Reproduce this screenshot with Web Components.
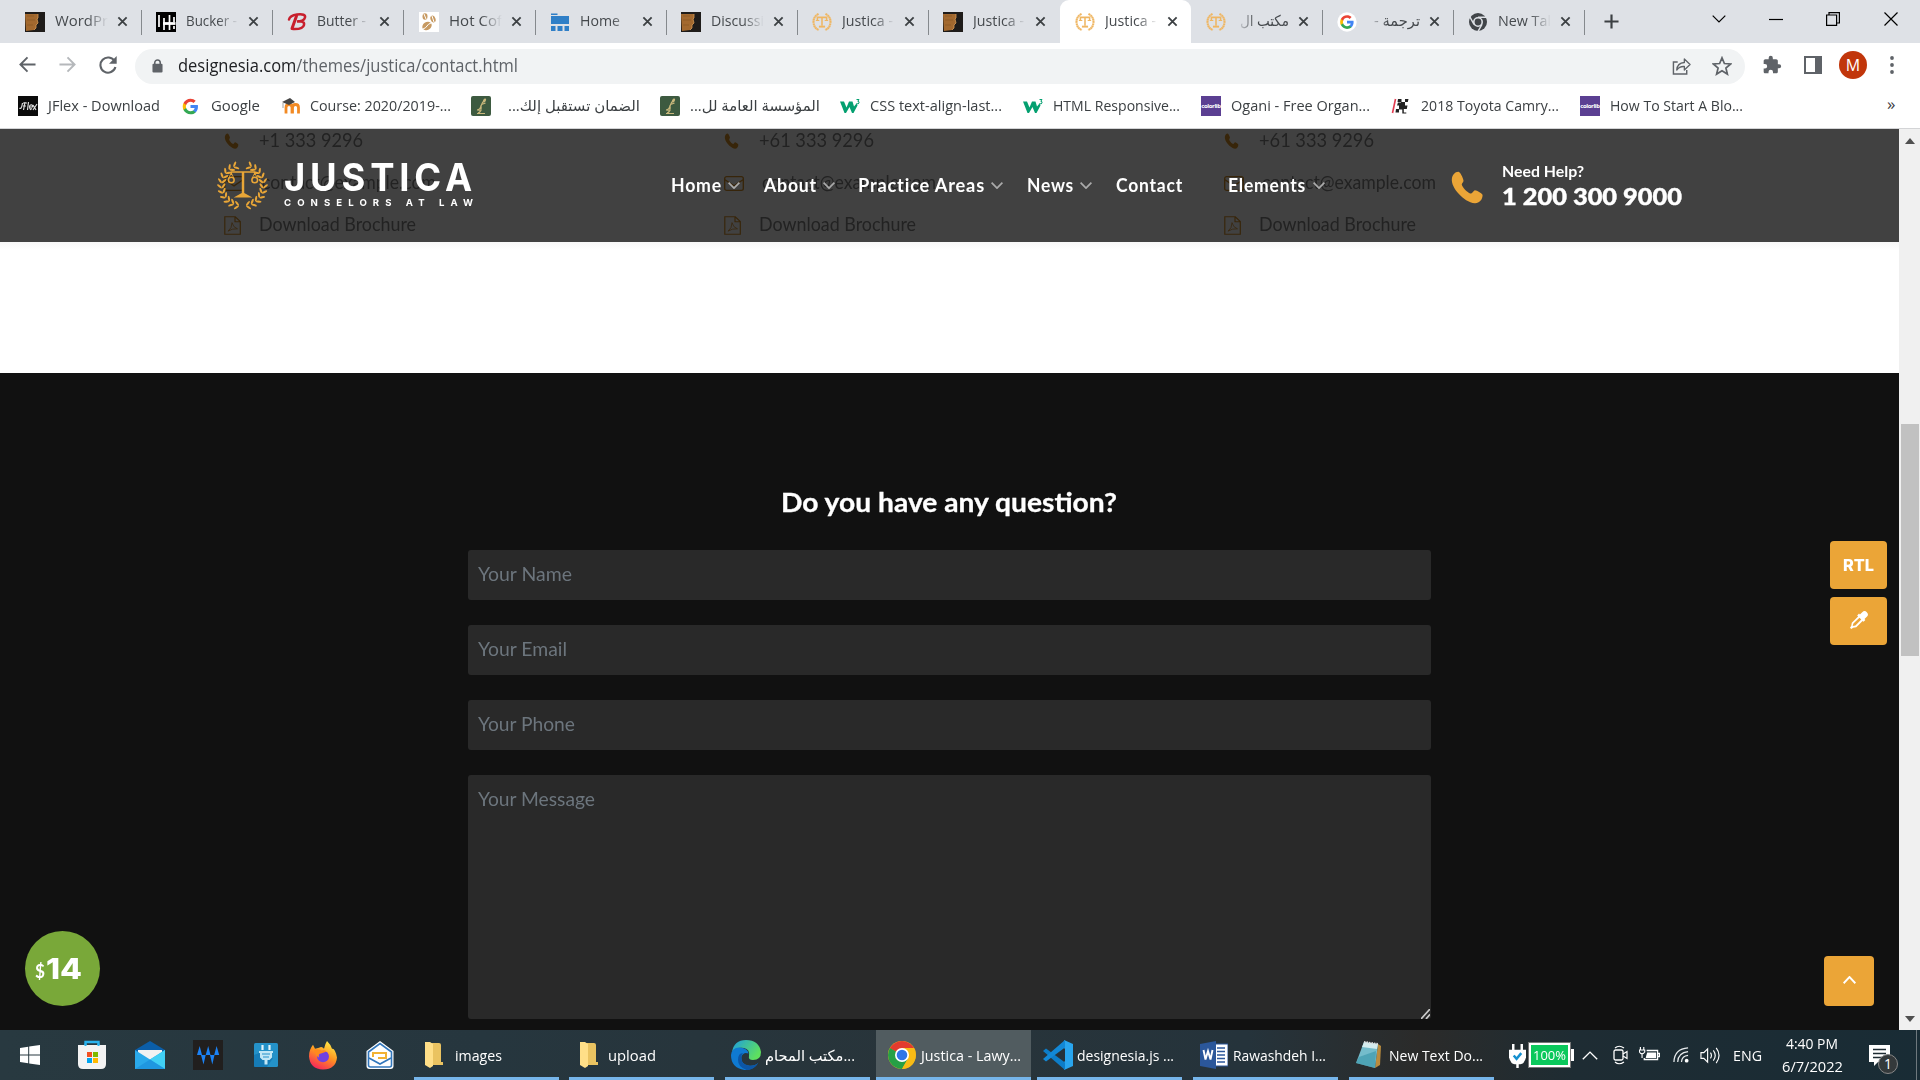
<!DOCTYPE html>
<html lang="en"><head><meta charset="utf-8"><title>Justica - Lawyer</title>
<style>
html,body{margin:0;height:100%;overflow:hidden;background:#111}
body{font-family:"Open Sans","Noto Sans","DejaVu Sans",sans-serif}
</style></head><body>
<desktop-screen></desktop-screen>
<script>
/* Laurel wreath: pairs of leaves along each half of a circle */
const leaves=(()=>{let s='';for(const side of[-1,1])for(let i=0;i<11;i++){const a=(10+i*14.5)*Math.PI/180,r=20.5;
 const x=26+side*Math.sin(a)*r,y=25.5+Math.cos(a)*r,t=Math.atan2(-Math.sin(a),side*Math.cos(a));
 for(const o of[-.75,.75]){const q=t+o;
 s+=`<ellipse rx="2.9" ry="1.05" transform="translate(${(x+Math.cos(q)*2.9).toFixed(1)} ${(y+Math.sin(q)*2.9).toFixed(1)}) rotate(${(q*180/Math.PI).toFixed(0)})"/>`}}
 return s})();
const G='<path fill="#4285F4" d="M45.1 24.5c0-1.6-.1-3.1-.4-4.5H24v8.5h11.8c-.5 2.8-2 5.1-4.4 6.7v5.5h7.1c4.2-3.8 6.6-9.5 6.6-16.2z"/><path fill="#34A853" d="M24 46c5.9 0 10.9-2 14.6-5.3l-7.1-5.5c-2 1.3-4.5 2.1-7.5 2.1-5.7 0-10.6-3.9-12.3-9.1H4.3v5.7C8 41.100 15.400 46 24 46z"/><path fill="#FBBC05" d="M11.700 28.200c-.4-1.3-.7-2.700-.7-4.200s.3-2.900.7-4.200v-5.700H4.300A22 22 0 0 0 2 24c0 3.600.9 6.900 2.300 9.900z"/><path fill="#EA4335" d="M24 10.700c3.200 0 6.100 1.100 8.400 3.300l6.300-6.300C34.900 4.200 29.900 2 24 2 15.400 2 8 6.900 4.300 14.100l7.400 5.700C13.400 14.600 18.300 10.700 24 10.700z"/>';
const GRASS='<rect width="20" height="20" rx="2" fill="#3d5a40"/><path d="M6 17.500h8M7 17q4-1 3-8M10 10q1-4 4-6M10.500 8.500l4-1.500M10 10q-1 4-4 4l4.500.5" stroke="#c9b87c" fill="none" stroke-width="1.200"/><ellipse cx="13.500" cy="4.500" rx="1.300" ry="2.200" transform="rotate(30 13.500 4.500)" fill="#c9b87c"/>';
const W3='<path d="M0 5.500h4l2.500 6 2.500-6h3.500l1.500 5 2.500-3 1 2-4 7.500h-1.500l-2.500-6-3.500 6H4.500z" fill="#04a070"/><path d="M16.500 3.500h2.500l-1.200 1.800q1.700 0 1.200 1.700t-2.500.5" stroke="#04a070" fill="none" stroke-width="1"/>';
const I={
 wood:['0 0 20 20','<rect width="20" height="20" fill="#1f1c1a"/><path d="M0 2l13 0 0 4-1 1 1 4-2 2v3L9 18 1 19z" fill="#a3692f"/><path d="M13 2v4l-1 1 1 4-2 2v3l-2 2" fill="none" stroke="#d59a55" stroke-width=".8"/><path d="M2 4h7M2 8h8M2 13h6" stroke="#8c5824" stroke-width=".8"/>'],
 H:['0 0 20 20','<rect width="20" height="20"/><path d="M3 3v12M8 6v12M13.500 3v15M18 5v5M18 14v3" stroke="#fff" stroke-width="1.700" fill="none"/><path d="M7 11.500h12.500" stroke="#fff" stroke-width="2.800"/>'],
 B:['0 0 20 20','<g fill="none" stroke="#c81f2d" stroke-linecap="round"><path d="M9.500 4L5 16.500" stroke-width="3"/><path d="M2 7.500Q3 3.500 10 2.500q9-1 8 3t-8 4q8-1 7 3.500T6 17" stroke-width="2.500"/></g>'],
 coffee:['0 0 20 20','<rect width="20" height="20" fill="#fff"/><g fill="#c79a62"><ellipse cx="6" cy="4.500" rx="2.500" ry="3.200"/><ellipse cx="14" cy="7" rx="2.500" ry="3.500" transform="rotate(-20 14 7)"/><ellipse cx="8" cy="14" rx="5" ry="4" transform="rotate(-35 8 14)"/></g><path d="M5 2l2 5M13 4l2 6M4 17q3-1 4-3t4-3" stroke="#fff" fill="none"/>'],
 home:['0 0 20 20','<path d="M1 1.500h6.500v1.500H1zM1 4h18v8H1z" fill="#2f7fc7"/><path d="M1 14h4.500v5H1zM7.500 14h5v5h-5zM14.500 14h4.500v5h-4.500z" fill="#2f7fc7"/>'],
 just:['0 0 52 52','<g stroke="#efb662" fill="none"><path d="M17 5Q3 12 4 27t14 20M35 5q14 7 13 22T34 47" stroke-width="5.500" stroke-dasharray="5 .8"/><path d="M14 21v-7h24v7M26 14v22" stroke-width="4"/><path d="M18 38h16" stroke-width="5"/><path d="M10 22h9M33 22h9" stroke-width="3"/></g>'],
 emblem:['0 0 52 50',`<g fill="#e9a637">${leaves}</g><g stroke="#e9a637" fill="none" stroke-width="1.500"><path d="M15 15v-3h23v3M26.500 12v24"/><path d="M15 13l-2.500 5M15 13l2.500 5M38 13l-2.500 5M38 13l2.500 5" stroke-width=".8"/><circle cx="15" cy="20" r="2.800"/><circle cx="38" cy="20" r="2.800"/></g><path d="M25.300 12h2.400v21l8 4.500H17.300l8-4.500z" fill="#e9a637"/>`],
 google:['0 0 48 48',G], gcirc:['-8 -8 64 64','<circle cx="24" cy="24" r="31" fill="#fff"/>'+G],
 chromeg:['0 0 20 20','<circle cx="10" cy="10" r="9" fill="#414549"/><circle cx="10" cy="10" r="4.200" fill="#414549" stroke="#dee1e6" stroke-width="1.600"/><path d="M10 5.300h8.200M6 12.400L2 5.200M14 12.300l-4 7" stroke="#dee1e6" stroke-width="1.400"/>'],
 x:['0 0 12 12','<path d="M1.500 1.500l9 9M10.500 1.500l-9 9" stroke="#3c4043" stroke-width="2"/>'],
 plus:['0 0 16 16','<path d="M8 .5v15M.5 8h15" stroke="#3c4043" stroke-width="2.300"/>'],
 dn:['0 0 14 8','<path d="M.7.7L7 7 13.300.7" stroke="currentColor" fill="none" stroke-width="var(--sw,1.200)"/>'],
 up:['0 0 14 8','<path d="M.7 7.300L7 1l6.300 6.300" stroke="currentColor" fill="none" stroke-width="var(--sw,1.200)"/>'],
 min:['0 0 14 14','<path d="M0 7.500h14" stroke="#000" stroke-width="1.200"/>'],
 max:['0 0 14 14','<path d="M.6 3h10v10.400H.6zM3 3V.6h10.400v10.400H11" stroke="#000" fill="none" stroke-width="1.200"/>'],
 close:['0 0 14 14','<path d="M.5.5l13 13M13.500.5l-13 13" stroke="#000" stroke-width="1.200"/>'],
 back:['0 0 18 18','<path d="M17.500 9H2M9 1.500L1.500 9 9 16.500" stroke="currentColor" stroke-width="2" fill="none"/>'],
 fwd:['0 0 18 18','<path d="M.5 9H16M9 1.500L16.500 9 9 16.500" stroke="currentColor" stroke-width="2" fill="none"/>'],
 reload:['0 0 18 18','<path d="M15.600 5.200A7.600 7.600 0 1 0 16.400 11" stroke="#5f6368" stroke-width="2.100" fill="none"/><path d="M17.700 0v7.700H10z" fill="#5f6368"/>'],
 lock:['0 0 12 15','<rect x=".5" y="5" width="11" height="9.500" rx="1.200" fill="#5f6368"/><path d="M3 6V4a3 3 0 0 1 6 0v2" fill="none" stroke="#5f6368" stroke-width="1.700"/>'],
 share:['0 0 20 18','<path d="M6 5H1.500v12h14v-4" fill="none" stroke="#5f6368" stroke-width="1.500"/><path d="M5 13q.5-7 8-7.500V2l6 5.500-6 5.500V9.500Q8 9 5 13z" fill="none" stroke="#5f6368" stroke-width="1.400" stroke-linejoin="round"/>'],
 star:['0 0 20 20','<path d="M10 1.800l2.400 5.700 6.200.5-4.700 4 1.500 6.100L10 14.800l-5.400 3.300L6.100 12 1.400 8l6.200-.5z" fill="none" stroke="#5f6368" stroke-width="1.700"/>'],
 puzzle:['0 0 24 24','<path fill="#5f6368" d="M20.500 11H19V7c0-1.100-.9-2-2-2h-4V3.500a2.500 2.500 0 0 0-5 0V5H4c-1.100 0-2 .9-2 2v3.800h1.500a2.700 2.700 0 0 1 0 5.400H2V20c0 1.100.9 2 2 2h3.800v-1.500a2.700 2.700 0 0 1 5.400 0V22H17c1.100 0 2-.9 2-2v-4h1.500a2.500 2.500 0 0 0 0-5z"/>'],
 side:['0 0 18 18','<path d="M1 1h16v16H1z" fill="none" stroke="#5f6368" stroke-width="2"/><path d="M11 1h6v16h-6z" fill="#5f6368"/>'],
 dots:['0 0 4 18','<g fill="#5f6368"><circle cx="2" cy="2" r="1.900"/><circle cx="2" cy="9" r="1.900"/><circle cx="2" cy="16" r="1.900"/></g>'],
 jflex:['0 0 20 20','<rect width="20" height="20" fill="#0b0b0b"/><path d="M1.500 12q2 2 3-5M7 6L5.500 14M5 7h4M5 10h3M10.500 6l-1 8M12 11h2.500q0-3-2-2t0 4.500l1.500-1M15 9l3 5M19 8l-4 6" stroke="#ddd" stroke-width="1.200" fill="none"/>'],
 moodle:['0 0 20 20','<path d="M5 17.500v-6q0-3 3-3t3 3v6M11.500 17.500v-6q0-3 3-3t3 3v6" stroke="#f28a24" stroke-width="2.800" fill="none"/><path d="M1 6l8-4 5 4-6 3z" fill="#444"/><path d="M2 7v5" stroke="#888" stroke-width=".8"/>'],
 grass:['0 0 20 20',GRASS], w3:['0 0 20 20',W3],
 toyota:['0 0 20 20','<path d="M4.500 3L1.500 17" stroke="#e23b50" stroke-width="1.600"/><path d="M7 3h3.500v3H14V3h3.500l-.7 3H14v3.500h2.500l-.7 3.500h-3v3.500h2.500v1h-4v-4H8v3H4.500L5 13h3V9.500H6L7 6.500h3V6H6.500z" fill="#222"/>'],
 phone:['0 0 24 24','<path fill="currentColor" d="M5.800.6C3.600.600 1.500 3 1.300 6 .700 12 9.500 22.500 17.500 23.500c3 .2 5.500-2.500 5.500-6 0-1-4.500-3.800-5.700-3.400-1 .4-1.600 2.600-3 2.300-2-.5-5.800-4.700-6-6.500 0-1 1.500-1.800 1.200-3.100C9.200 5 7.300.700 5.800.6z"/>'],
 mail:['0 0 20 16','<rect x=".7" y=".7" width="18.600" height="14.600" rx="2" fill="none" stroke="currentColor" stroke-width="1.400"/><path d="M1 4l9 6.500L19 4" fill="none" stroke="currentColor" stroke-width="1.400"/>'],
 pdf:['0 0 17 20','<path d="M.8.8h10.500l5 5v13.400H.8zM11 1v5h5" fill="none" stroke="currentColor" stroke-width="1.200"/><path d="M4 16q4-3 4-9 1 5 5.500 6.500Q8 13 4 16z" fill="none" stroke="currentColor" stroke-width=".8"/>'],
 drop:['0 0 20 20','<path fill="#fff" d="M18.700 1.300a3.600 3.600 0 0 0-5.100 0L11 3.900l-1-1L8 5l1 1-7 7-.6 3.500L0 18.500 1.500 20l2-1.400L7 18l7-7 1 1 2.100-2-1-1 2.600-2.600a3.600 3.600 0 0 0 0-5.100zM6 16l-3 .8.800-2.800L10.500 7.500l2 2z"/>'],
 win:['0 0 20 20','<path fill="#fff" d="M0 3l8.200-1.200v7.700H0zM9.200 1.600L20 0v9.500H9.200zM0 10.500h8.200v7.700L0 17zM9.200 10.500H20V20L9.200 18.400z"/>'],
 store:['0 0 30 30','<path d="M8.500 8V2h13v6" fill="none" stroke="#2bb3ee" stroke-width="2.400"/><path d="M1 5h28v19q0 5-5 5H6q-5 0-5-5z" fill="#f3f3f3"/><path d="M8.500 3.500V6M21.500 3.500V6" stroke="#2bb3ee" stroke-width="2"/><path d="M10 12h5v5h-5z" fill="#f25022"/><path d="M16 12h5v5h-5z" fill="#7fba00"/><path d="M10 18h5v5h-5z" fill="#00a4ef"/><path d="M16 18h5v5h-5z" fill="#ffb900"/>'],
 wmail:['0 0 30 30','<path d="M0 10L15 1l15 9v8H0z" fill="#0b5ea8"/><path d="M3 10h24v8L15 21 3 17z" fill="#f2f2f2"/><path d="M0 10l15 9.500L30 10v19H0z" fill="#2aa9ea"/><path d="M30 10L15 19.500 30 29z" fill="#41d0f5"/><path d="M15 19.500L30 29H0z" fill="#1f97e0"/>'],
 wave:['0 0 30 30','<rect width="30" height="30" fill="#211f1e"/><path d="M4 15l2.700-9 2.300 9zM12.700 15l2.500-9 2.300 9zM21.200 15l2.400-9 2.600 9zM8 15h4.700l-2.200 9.500zM17 15h4.500l-2.200 9.500z" fill="#1b82f5"/>'],
 plug:['0 0 24 24','<rect width="24" height="24" rx="1.500" fill="#2492c9"/><path d="M0 12L5 10l14 5-6 9H0z" fill="#0d6eab" opacity=".6"/><path d="M8.500 2v5M15.500 2v5" stroke="#e2f4fb" stroke-width="2.200"/><path d="M5 8h14v2h-1v4.500l-2.500 2.500H13.500v4.500h-3V17H8.500L6 14.500V10H5z" fill="#c2e7f6"/><path d="M8 11h8M9 14h6" stroke="#2492c9" stroke-width="1.200"/>'],
 firefox:['0 0 28 30','<defs><linearGradient id="a" x1=".8" y1="0" x2=".3" y2="1"><stop stop-color="#fff24a"/><stop offset=".5" stop-color="#ff9320"/><stop offset="1" stop-color="#f5245c"/></linearGradient></defs><path d="M18 0q4 4 5 8 3-1 5 9-1 12-14 12.500Q1 29 0 16 0 9 4 4l2 4 4-1q3-2 5 1 1-5 3-8z" fill="url(#a)"/><circle cx="14" cy="16" r="6" fill="#7141e0"/><path d="M5 9q6-1 8 1 4-1 4 1l-5 2q-3 0-2 4Q6 15 5 9z" fill="#ff8a1c"/>'],
 omail:['0 0 30 30','<path d="M1.500 11L15 1l13.500 10v15q0 3-3 3h-21q-3 0-3-3z" fill="#fff"/><path d="M3.500 12L15 3.500 26.500 12v13q0 2-2 2h-19q-2 0-2-2z" fill="none" stroke="#3277bc" stroke-width="1.600"/><path d="M4 18l11 6 11-6" fill="none" stroke="#3277bc" stroke-width="1.600"/><path d="M8 17v-4h13v5h-8" fill="none" stroke="#f2b233" stroke-width="2"/>'],
 folder:['0 0 18 26','<path d="M5 1h9q2 0 2 2v17h2v3H5z" fill="#eac361"/><path d="M0 0h5l3 2v22l-3 2-5-3z" fill="#ffdf88"/>'],
 edge:['0 0 30 30','<defs><linearGradient id="e" x2="1" y2=".5"><stop stop-color="#1d9de0"/><stop offset="1" stop-color="#5ee05e"/></linearGradient></defs><path d="M1 12Q3 0 15 0q13 0 15 12 0 8-8 8-5 0-4-4 1-7-5-8Q5 7 1 12z" fill="url(#e)"/><path d="M0 15Q1 7 9 7.500q8 1 8.500 6-5-2-7 3-1 8 7 9 6 1 10-3-5 8-14 7.500Q0 28 0 15z" fill="#0f7ad2"/><path d="M10.500 16q-1 8 7 9.500 6 1 10-3-5 8-12 7.500Q7 27 7 20q0-7 5-7-1 1-1.500 3z" fill="#0c56a6"/>'],
 chrome:['0 0 28 28','<circle cx="14" cy="14" r="14" fill="#f8bb15"/><path d="M14 14L1.900 7A14 14 0 0 1 26.100 7z" fill="#e33b2e"/><path d="M14 7h12.100l.4.800L14 14 1.900 7z" fill="#e33b2e"/><path d="M1.900 7A14 14 0 0 0 14 28l6-10.500L14 14z" fill="#26a045"/><path d="M14 7h12.100Q29 13 26.500 20T14 28l6-10.500z" fill="#f8bb15"/><circle cx="14" cy="14" r="7" fill="#fff"/><circle cx="14" cy="14" r="5.300" fill="#2f75e8"/>'],
 vsc:['0 0 30 30','<path d="M21 0l9 4v22l-9 4z" fill="#29a5ee"/><path d="M0 11l3-2.500 19 14V30z" fill="#0d7dc8"/><path d="M0 19l3 2.500 19-14V0z" fill="#1288d6"/><path d="M22 8v14l-8-7z" fill="#25313a"/>'],
 word:['0 0 28 28','<path d="M14 3h14v22H14z" fill="#fff" stroke="#2b579a"/><path d="M17 7h8M17 10.500h8M17 14h8M17 17.500h8M17 21h8" stroke="#2b579a" stroke-width="1.500"/><path d="M0 3l16-3v28L0 25z" fill="#2b579a"/><path d="M3.500 9l2 9.500L8 10l2.500 8.500 2-9.500" fill="none" stroke="#fff" stroke-width="1.900"/>'],
 note:['0 0 28 28','<path d="M23 3l3 2-1 19-5 3z" fill="#b98b3e"/><path d="M9 1l14 2-3 24L1 22z" fill="#74bccb"/><path d="M9 1l14 2-1 5L7 6z" fill="#d5ecee"/><path d="M4 16l17-6-1 17L1 22z" fill="#3a97ab" opacity=".65"/><path d="M9 1l14 2" stroke="#ddd" stroke-width="2" stroke-dasharray="1.500 1"/>'],
 tplug:['0 0 18 26','<path d="M4.500 1v8M13.500 1v8M9 20v6" stroke="#fff" stroke-width="2.600"/><path d="M0 7h18v8q-2 7-6 7H6q-4 0-6-7z" fill="#fff"/><path d="M5 13l3 3.500 5-6" stroke="#1590d0" stroke-width="2.600" fill="none"/>'],
 meet:['0 0 16 20','<rect x="1" y="5" width="9" height="10" rx="1.500" fill="none" stroke="#fff" stroke-width="1.300"/><path d="M10 9l4-2.500v7L10 11M2 3q4-3.500 9 0M2 17q4 3.500 9 0" fill="none" stroke="#fff" stroke-width="1.200"/>'],
 bat:['0 0 22 16','<path d="M8.500 5.500H18v5.500H7z" fill="#fff"/><path d="M8 3.500h11.500v9h-14V11M20 6.500h1.500v3H20" fill="none" stroke="#fff" stroke-width="1.300"/><path d="M1.500 0v3M5 0v3M.5 3H6v2q-3 4-5.500 0zM3.200 6v5" stroke="#fff" stroke-width="1.200" fill="#25343d"/>'],
 wifi:['0 0 17 17','<g fill="none" stroke="#e8ecee" stroke-width="1.300"><path d="M1 16Q1.500 2 16 1"/><path d="M5 16Q5.500 6 16 5"/><path d="M9 16Q9.500 9.500 16 9"/></g><circle cx="14.500" cy="14.500" r="2" fill="#fff"/>'],
 sound:['0 0 21 18','<path d="M1 6h3l4-4v14l-4-4H1zM11 6q2 3 0 6M14 3.500q4 5.500 0 11M17 1q6 8 0 16" fill="none" stroke="#fff" stroke-width="1.200"/>'],
 notif:['0 0 21 21','<path d="M0 0h21v17H9l-4 4v-4H0z" fill="#fff"/><path d="M4 4.500h13M4 8.500h13M4 12.500h9" stroke="#1e2b32" stroke-width="1.500"/>'],
 grip:['0 0 10 10','<path d="M0 10L10 0M5.500 10L10 5.500" stroke="#ccc" stroke-width="1.800"/>'],
 tri:['0 0 10 6','<path d="M0 6l5-6 5 6z" fill="#505050"/>'], trd:['0 0 10 6','<path d="M0 0l5 6 5-6z" fill="#505050"/>']
};
const def=(tag,css,html,after)=>customElements.define(tag,class extends HTMLElement{
 connectedCallback(){if(this.shadowRoot)return;const r=this.attachShadow({mode:'open'});
  r.innerHTML=`<style>*{box-sizing:border-box}${css}</style>`+(typeof html==='function'?html(this):html);if(after)after(this,r)}});
const A=(e,n,d='')=>e.getAttribute(n)??d;
const ic=(n,w,h=w,st='')=>`<ui-icon name="${n}" w="${w}" h="${h}" style="${st}"></ui-icon>`;
const ft=(t,w,st='',dir='ltr')=>`<fit-text w="${w}" dir="${dir}" style="${st}">${t}</fit-text>`;

def('ui-icon',':host{display:block;flex:none}svg{display:block}',e=>{
 const n=A(e,'name'),w=A(e,'w'),h=A(e,'h');
 if(n==='colorlib')return `<div style="width:20px;height:20px;background:#5b3f92;color:#fff;font:bold 6px/20px 'Open Sans';letter-spacing:-.4px;text-align:center;overflow:hidden">colorlib</div>`;
 return `<svg width="${w}" height="${h}" viewBox="${I[n][0]}" preserveAspectRatio="none">${I[n][1]}</svg>`});
/* Text squeezed or stretched to an exact advance width */
def('fit-text',':host{display:block;flex:none;white-space:nowrap}span{display:inline-block;transform-origin:0 50%}','<span><slot></slot></span>',(e,r)=>{
 const s=r.querySelector('span');s.style.direction=A(e,'dir','ltr');e.style.direction='ltr';e.style.width=A(e,'w')+'px';
 const n=s.getBoundingClientRect().width;if(n)s.style.transform=`scaleX(${A(e,'w')/n})`});

def('browser-tab',`:host{display:flex;align-items:center;width:131.2px;flex:none;height:43px;padding-left:15px;font-size:15px;color:#45494d;border-radius:9px 9px 0 0}
 :host([active]){background:#fff}.t{width:53px;height:24px;line-height:24px;margin:-3px 0 0 10px;flex:none;overflow:hidden;-webkit-mask:linear-gradient(90deg,#000 60%,transparent)}
 .t.r{display:flex;justify-content:flex-end;-webkit-mask:linear-gradient(270deg,#000 60%,transparent)}
 .s{width:1px;flex:none;height:25px;background:#85898d;margin:1px -3px 0 13px}:host([active]) .s,:host([nosep]) .s{background:none}`,
 e=>ic(A(e,'icon'),20)+`<div class="t ${e.hasAttribute('rtl')?'r':''}">${ft(e.dataset.t,A(e,'w'),'',e.hasAttribute('rtl')?'rtl':'ltr')}</div>`+ic('x',11,11,'margin-left:9px')+'<div class="s"></div>');
const tabs=[['wood','WordPr',53],['H','Bucker -',51],['B','Butter -',49],['coffee','Hot Cof',53],['home','Home',40],['wood','Discussi',53],['just','Justica -',51],['wood','Justica -',51],['just','Justica -',51],['just','مكتب ال',49],['gcirc','ترجمة -',46],['chromeg','New Tal',53]];
def('tab-strip',':host{display:flex;height:43px;background:#dee1e6;padding-left:10px;align-items:center}',
 ()=>tabs.map((t,i)=>`<browser-tab icon="${t[0]}" data-t="${t[1]}" w="${t[2]}" ${i==8?'active':''} ${i==7?'nosep':''} ${i==9||i==10?'rtl':''}></browser-tab>`).join('')+
 ic('plus',15,15,'margin-left:20px')+ic('dn',14,8,'margin:-5px 0 0 93px')+ic('min',14,14,'margin:-5px 0 0 43px')+ic('max',14,14,'margin:-5px 0 0 43px')+ic('close',14,14,'margin:-5px 0 0 44px'));
def('address-bar',`:host{display:flex;align-items:center;height:45px;padding:0 0 2px 18px;background:#fff}
 .o{display:flex;align-items:center;width:1610px;flex:none;height:35px;margin-left:18px;border-radius:18px;background:#f1f3f4;padding-left:17px;font-size:18px;color:#5f6368;margin-top:3px}
 .g{width:1154px;flex:none}.a{width:28px;height:28px;border-radius:50%;background:#c1360b;color:#fff;font-size:16px;line-height:28px;text-align:center;margin-left:17px}b{color:#202124;font-weight:400}`,
 ic('back',17,17,'color:#5f6368;margin-left:1px')+ic('fwd',17,17,'color:#b5b8bb;margin-left:23px')+ic('reload',18,18,'margin-left:23px')+
 `<div class="o">${ic('lock',11,14)}${ft('<b>designesia.com</b>/themes/justica/contact.html',340,'margin:-2px 0 0 15px')}<div class="g"></div>${ic('share',19,18)}${ic('star',20,20,'margin-left:21px')}</div>`+
 ic('puzzle',20,20,'margin-left:17px')+ic('side',18,18,'margin-left:22px')+'<div class="a">M</div>'+ic('dots',4,18,'margin-left:23px'));
const bm=[[18,'jflex','JFlex - Download',30,112],[182,'google','Google',29,49],[281,'moodle','Course: 2020/2019-...',29,141],[471,'grass','الضمان تستقبل إلك...',37,132],[660,'grass','المؤسسة العامة لل...',30,130],[840,'w3','CSS text-align-last...',30,132],[1023,'w3','HTML Responsive...',30,127],[1201,'colorlib','Ogani - Free Organ...',30,139],[1391,'toyota','2018 Toyota Camry...',30,138],[1580,'colorlib','How To Start A Blo...',30,133],[1887]];
def('book-mark',':host{display:flex;align-items:center;flex:none;height:40px;font-size:15px;color:#3c4043}',
 e=>{const b=bm[+A(e,'n')],s=b[1]=='google'?17:20;return ic(b[1],s,s,'margin-top:-4px')+ft(b[2],b[4],`margin:-6px 0 0 ${b[3]-s}px`,b[1]=='grass'?'rtl':'ltr')});
def('bookmarks-bar',':host{display:flex;height:41px;padding:0 0 0 18px;align-items:center;background:#fff;border-bottom:1px solid #d3d4d6;box-sizing:border-box}.m{font-size:17px;margin:-9px 0 0 0;color:#3c4043}',
 ()=>bm.slice(0,10).map((b,i)=>`<book-mark n="${i}" style="width:${bm[i+1][0]-b[0]}px"></book-mark>`).join('')+'<span class="m">»</span>');

def('contact-card',`:host{display:flex;flex-direction:column;width:500px;flex:none;font:19px/42px Lato,sans-serif;color:#858585}
 .r{display:flex;height:42px;align-items:center}.i{width:36px;color:#d8922a}fit-text{margin-top:-2px}`,
 e=>{const p=A(e,'tel');return `<div class="r"><div class="i">${ic('phone',15,16)}</div>${ft(p,p[1]=='6'?115:104,'margin-left:-1px')}</div>
 <div class="r"><div class="i">${ic('mail',20,15)}</div>${ft('contact@example.com',174,'margin-left:2px')}</div>
 <div class="r"><div class="i">${ic('pdf',17,19)}</div>${ft('Download Brochure',157,'margin-left:-1px')}</div>`});
const nav=[['Home',671,51,728],['About',764,53,823],['Practice Areas',858,127,991],['News',1027,47,1080],['Contact',1116,67,0],['Elements',1228,78,1313],['',1451]];
def('nav-link',':host{display:flex;align-items:center;flex:none;font:700 18px/24px Lato,sans-serif;color:#fff}',
 e=>{const n=nav[+A(e,'n')];return ft(n[0],n[2],'letter-spacing:.8px;margin-top:-2px')+(n[3]?ic('dn',12,7,`--sw:2;color:#aaa;margin:-1px 0 0 ${n[3]-n[1]-n[2]}px`):'')});
def('site-header',`:host{position:absolute;left:0;top:0;width:1899px;height:113px;box-sizing:border-box;background:rgba(0,0,0,.745);display:flex;align-items:center;padding-left:216px;color:#fff}
 .l{margin-left:15px;height:48px;width:387px}.h{margin-left:18px;font-family:Lato,sans-serif;font-weight:900}`,
 ()=>ic('emblem',53,50,'margin-top:-1px')+`<div class="l">${ft('JUSTICA',193,'font:700 38px/36px Inter,sans-serif;letter-spacing:5px;margin-top:-3px')}${ft('CONSELORS AT LAW',195,'font:700 9.500px/11px Inter,sans-serif;letter-spacing:6px;margin-top:2px')}</div>`+
 nav.slice(0,6).map((n,i)=>`<nav-link n="${i}" style="width:${nav[i+1][1]-n[1]-(i==5?1:0)}px"></nav-link>`).join('')+ic('phone',34,33,'color:#eba537;margin-top:3px')+
 `<div class="h">${ft('Need Help?',82,'font-size:15.500px;line-height:22px;font-weight:700;margin-top:-1px')}${ft('1 200 300 9000',180,'font-size:23.500px;line-height:27px;margin-top:1px;-webkit-text-stroke:.4px #fff')}</div>`);
def('form-field',`:host{display:block;box-sizing:border-box;width:963px;height:50px;margin-bottom:25px;background:#292929;border-radius:3px;padding:0 10px;font:20px/47px Lato,sans-serif;color:#6c757d}
 :host([area]){height:244px;display:flex;justify-content:space-between;padding-right:1px}`,
 e=>ft(A(e,'label'),A(e,'w'))+(e.hasAttribute('area')?ic('grip',9,10,'align-self:flex-end'):''));
def('question-form',`:host{display:flex;flex-direction:column;align-items:center;height:657px;background:#111;padding-top:104px;box-sizing:border-box}
 form{margin:23px 0 0}h2{margin:0 2px 0 0;font:700 27.500px/50px Lato,sans-serif;color:#fff;-webkit-text-stroke:.3px #fff}`,
 `<h2>${ft('Do you have any question?',336)}</h2><form><form-field label="Your Name" w="94"></form-field><form-field label="Your Email" w="89"></form-field><form-field label="Your Phone" w="97"></form-field><form-field area label="Your Message" w="117"></form-field></form>`);
def('scroll-bar',':host{display:flex;flex-direction:column;align-items:center;justify-content:space-between;width:21px;height:901px;background:#f0f0f0;padding:9px 0 8px;box-sizing:border-box}.t{width:18px;height:232px;background:#c1c1c1;margin-top:-81px}',
 ic('tri',10,6)+'<div class="t"></div>'+ic('trd',10,6));
def('float-button',`:host{position:absolute;display:flex;align-items:center;justify-content:center;background:#eba537;border-radius:4px;color:#fff}`,'<slot></slot>');
def('price-badge',`:host{position:absolute;left:25px;top:802px;width:75px;height:75px;border-radius:50%;background:#79a839;color:#fff;display:flex;align-items:center;padding-left:10px;font-family:Lato,sans-serif;font-weight:900;box-sizing:border-box}`,
 ft('$',10,'font-size:19px;font-weight:700;margin-top:4px')+ft('14',36,'font:800 29px/36px Inter,sans-serif;margin:1px 0 0 1px'));
def('web-page',`:host{display:flex;position:relative;height:901px;overflow:hidden;background:#fff}.p{width:1899px}
 .c{display:flex;height:244px;padding:0 0 0 224px;overflow:hidden}.c contact-card{margin-top:-9px}.sh{position:absolute;top:113px;left:0;width:1899px;height:8px;background:linear-gradient(#f7f7f7,#fff)}`,
 `<div class="p"><div class="c"><contact-card tel="+1 333 9296"></contact-card><contact-card tel="+61 333 9296"></contact-card><contact-card tel="+61 333 9296"></contact-card></div><question-form></question-form></div><scroll-bar></scroll-bar><div class="sh"></div>
 <site-header></site-header><price-badge></price-badge>
 <float-button style="left:1830px;top:412px;width:57px;height:48px">${ft('RTL',31,'font:800 16.500px/24px Inter,sans-serif;margin-top:-1px')}</float-button>
 <float-button style="left:1830px;top:468px;width:57px;height:48px">${ic('drop',18,18,'margin-top:-2px')}</float-button>
 <float-button style="left:1824px;top:827px;width:50px;height:50px">${ic('up',13,8,'--sw:2;margin-top:-2px')}</float-button>`);

const tb=[['folder',18,26,11,'images',12,47],['folder',18,26,11,'upload',10,48],['edge',30,30,6,'مكتب المحام...',4,90],['chrome',28,28,12,'Justica - Lawy...',5,100],['vsc',30,30,6,'designesia.js ...',4,97],['word',28,28,7,'Rawashdeh I...',5,93],['note',28,28,6,'New Text Do...',6,94]];
const tw=[[145,10],[145,11],[145,6],[155,6],[145,11],[145,11],[145,15]];
def('task-button',`:host{display:flex;align-items:center;flex:none;height:50px;border-bottom:3px solid #76b5ea;color:#fff;font-size:15px;box-sizing:border-box;padding-top:2px}:host([active]){background:#515c60}`,
 e=>{const b=tb[+A(e,'n')];return ic(b[0],b[1],b[2],`margin-left:${b[3]}px`)+ft(b[4],b[6],`margin-left:${b[5]}px`)});
def('tray-area',`:host{display:flex;align-items:center;flex:none;color:#fff;font-size:15px}
 .b{width:41px;height:24px;border:2px solid #fff;outline:1px solid #777;background:#0bc85c;line-height:20px;margin-left:3px;padding-left:2px;font-size:13.500px}.n{width:3px;height:12px;background:#fff;margin-left:1px}
 .k{display:flex;flex-direction:column;align-items:center;width:62px;margin-left:19px;line-height:23px}.w{position:relative;margin-left:26px}
 .d{position:absolute;left:9px;top:9px;width:20px;height:20px;border-radius:50%;background:#34393b;border:1px solid #888;font-size:14px;line-height:18px;text-align:center}.e{width:1px;height:50px;background:#6e787d;margin-left:26px}`,
 ic('tplug',17,25)+`<div class="b">${ft('100%',33)}</div><div class="n"></div>`+ic('up',16,9,'margin-left:8px')+ic('meet',16,20,'margin-left:15px')+ic('bat',21,16,'margin-left:10px')+ic('wifi',16,16,'margin-left:13px')+ic('sound',20,17,'margin-left:11px')+ft('ENG',29,'margin-left:13px')+
 `<div class="k">${ft('4:40 PM',52)}${ft('6/7/2022',61)}</div><div class="w">${ic('notif',21,21)}<div class="d">1</div></div><div class="e"></div>`);
def('task-bar',':host{display:flex;align-items:center;height:50px;background:linear-gradient(90deg,#283940 0,#26363e 25%,#28343a 48%,#25333b 65%,#2b2b2a 74%,#1e2c33 82%,#192c35 100%)}',
 ic('win',20,20,'margin-left:20px')+ic('store',30,30,'margin-left:37px')+ic('wmail',30,30,'margin-left:28px')+ic('wave',30,30,'margin-left:28px')+ic('plug',24,24,'margin-left:31px')+ic('firefox',28,29,'margin-left:31px')+ic('omail',30,30,'margin-left:28px')+'<div style="width:19px"></div>'+
 tb.map((b,i)=>`<task-button n="${i}" ${i==3?'active':''} style="width:${tw[i][0]}px;margin-right:${tw[i][1]}px"></task-button>`).join('')+'<tray-area></tray-area>');
def('desktop-screen',':host{display:flex;flex-direction:column;width:1920px;height:1080px;overflow:hidden;background:#fff}',
 '<tab-strip></tab-strip><address-bar></address-bar><bookmarks-bar></bookmarks-bar><web-page></web-page><task-bar></task-bar>');
</script></body></html>
